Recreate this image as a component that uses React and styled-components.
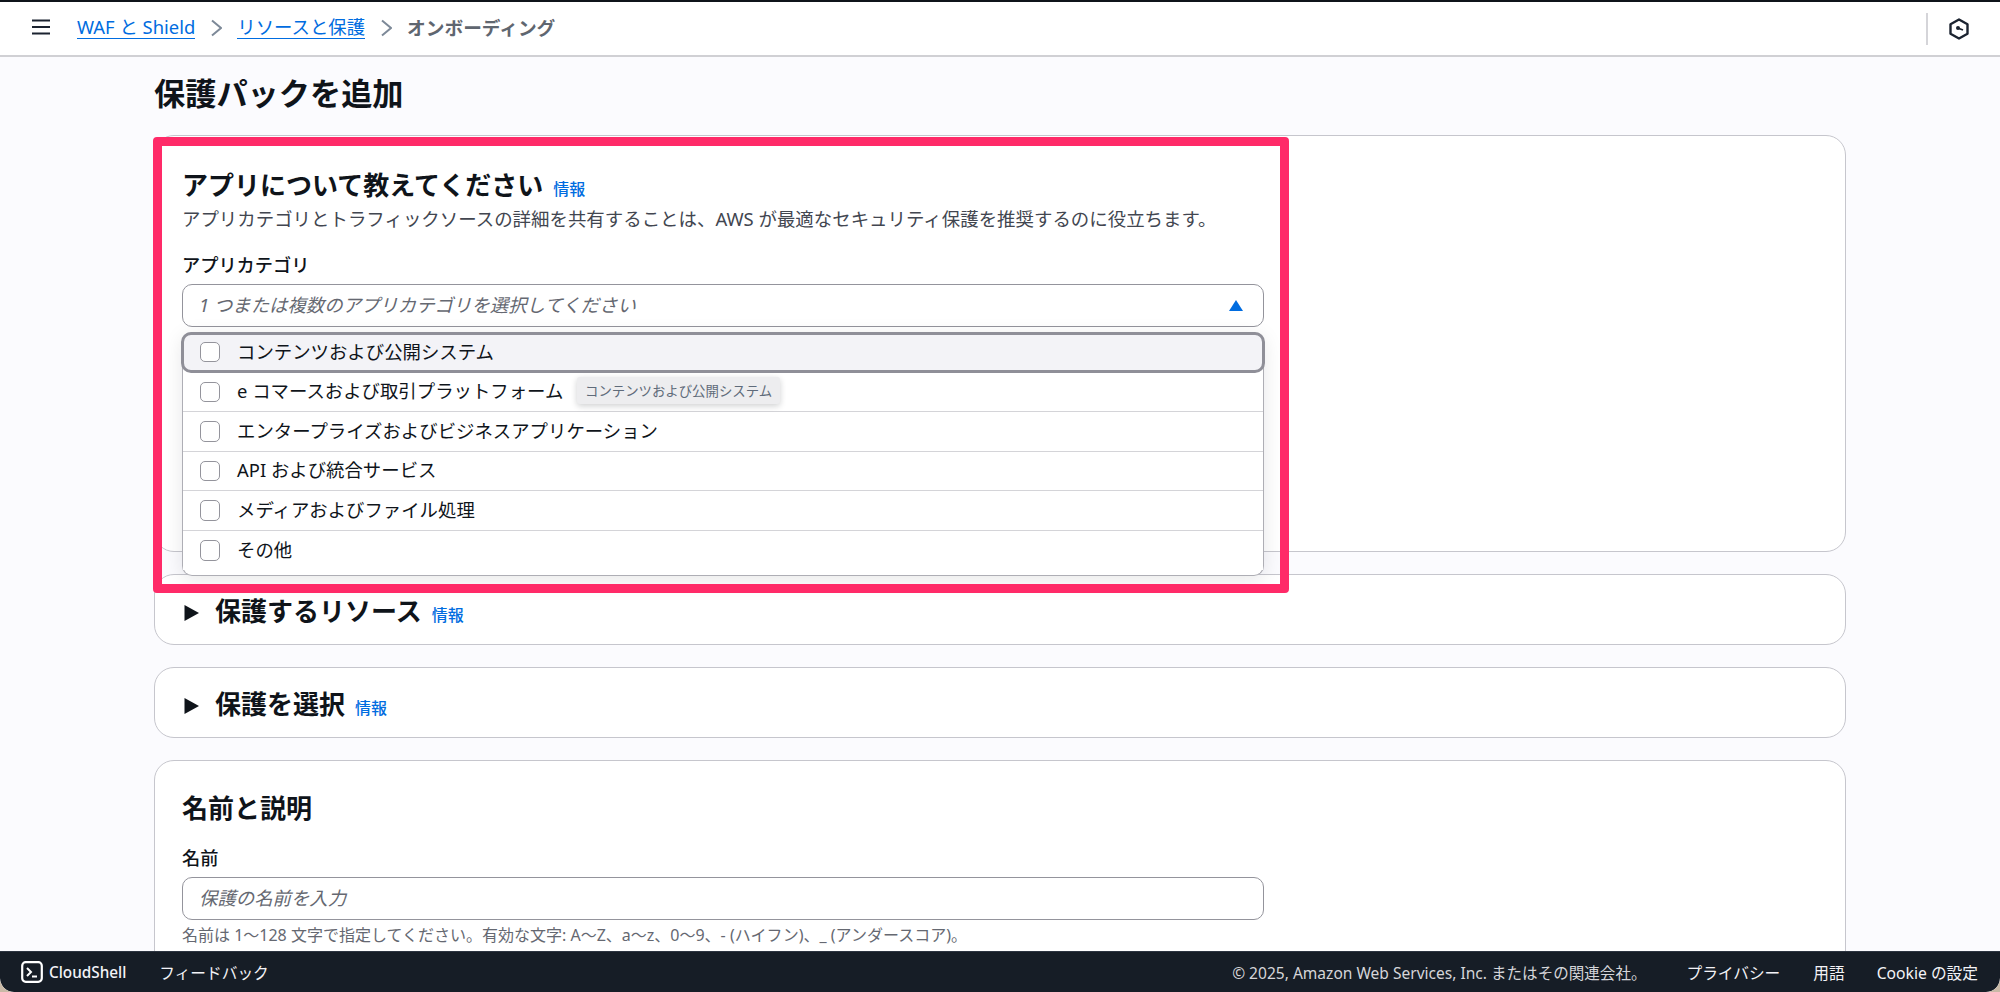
import React from "react";
import styled, { createGlobalStyle } from "styled-components";

const Global = createGlobalStyle`
  html, body { margin: 0; padding: 0; height: 100%; background: #c9b9a6; }
  body { font-family: "Noto Sans", "Noto Sans CJK JP", sans-serif; color: #0f141a; overflow: hidden; }
  #root { height: 992px; }
  * { box-sizing: border-box; }
`;

const Shell = styled.div`
  height: 992px;
  display: flex;
  flex-direction: column;
  overflow: hidden;
  background: #fbfbfe;
  border-radius: 0 0 14px 14px;
`;

const Header = styled.header`
  flex: none;
  height: 57px;
  display: flex;
  align-items: center;
  padding: 0 31px 0 31px;
  background: #fff;
  border-top: 2px solid #0f141a;
  border-bottom: 2px solid #d0d0d4;
`;

const MenuButton = styled.button`
  display: flex;
  padding: 0;
  border: 0;
  background: none;
  color: #1b2330;
  width: 20px;
  margin-top: -4px;
  margin-right: 26px;
`;

const Crumbs = styled.nav`
  display: flex;
  align-items: center;
  gap: 15.5px;
  font-size: 18.4px;
  flex: 1;
  padding-bottom: 2px;
`;

const CrumbLink = styled.a`
  color: #006ce0;
  line-height: 22px;
  border-bottom: 1.5px solid #006ce0;
`;

const CrumbCurrent = styled.span`
  color: #5f6670;
  font-size: 18.7px;
  font-weight: 700;
  line-height: 22px;
`;

const Chevron = styled.svg`
  width: 11px;
  height: 18px;
  color: #7d8998;
`;

const Divider = styled.span`
  width: 2px;
  height: 32px;
  background: #d5d5d9;
  margin-right: 21px;
  margin-left: 1px;
`;

const Main = styled.main`
  flex: 1;
  position: relative;
  min-height: 0;
  overflow: hidden;
  padding: 0 154px;
`;

const PageTitle = styled.h1`
  margin: 0;
  height: 78px;
  padding-top: 14px;
  font-size: 31.2px;
  line-height: 44px;
  font-weight: 700;
`;

const Stack = styled.div`
  display: flex;
  flex-direction: column;
  gap: 22.3px;
`;

const Card = styled.section`
  background: #fff;
  border: 1.3px solid #c6c6cd;
  border-radius: 20px;
  padding: ${(p) => p.$pad || "31px 27px"};
  height: ${(p) => p.$height || "auto"};
  flex: none;
`;

const CardTitle = styled.h2`
  margin: 0;
  display: flex;
  align-items: baseline;
  gap: 10px;
  font-size: 26px;
  line-height: 36px;
  font-weight: 700;
`;

const Info = styled.a`
  color: #006ce0;
  font-size: 16px;
  font-weight: 500;
`;

const Desc = styled.p`
  margin: -1px 0 0;
  font-size: 18.45px;
  line-height: 25px;
  color: #424650;
`;

const Label = styled.div`
  font-size: 18.2px;
  font-weight: 500;
  line-height: 24px;
  margin-top: ${(p) => p.$top || "21.5px"};
  margin-bottom: 7px;
`;

const FieldBox = styled.div`
  position: relative;
  width: 1082px;
`;

const InputBox = styled.div`
  height: 43px;
  display: flex;
  align-items: center;
  justify-content: space-between;
  padding: 0 20px 3px 16px;
  background: #fff;
  border: 1.4px solid #94949c;
  border-radius: 10px;
  font-size: 18.4px;
  font-style: italic;
  color: #656871;
`;

const Caret = styled.svg`
  width: 14px;
  height: 11px;
  margin-top: 3px;
  color: #006ce0;
`;

const Dropdown = styled.div`
  position: absolute;
  left: 0;
  right: 0;
  top: 48px;
  height: 244px;
  background: #fff;
  border: 1.8px solid #aeaeb5;
  border-top: 0;
  border-radius: 10px;
  box-shadow: 0 4px 20px rgba(15, 20, 26, 0.1);
  display: flex;
  flex-direction: column;
`;

const Option = styled.div`
  position: relative;
  flex: none;
  height: ${(p) => (p.$active ? "41px" : "39.6px")};
  margin: ${(p) => (p.$active ? "0 -1.8px" : "0")};
  display: flex;
  align-items: center;
  gap: 17px;
  padding-left: ${(p) => (p.$active ? "15.3px" : "16.5px")};
  font-size: 18.4px;
  background: ${(p) => (p.$active ? "#f3f3f7" : "#fff")};
  border: ${(p) => (p.$active ? "3px solid #8f8f98" : "0")};
  border-radius: ${(p) => (p.$active ? "10px" : "0")};
  border-bottom: ${(p) => (p.$active ? "3px solid #8f8f98" : p.$last ? "0" : "1.6px solid #d4d4d8")};
  color: #0f141a;
`;

const OptionText = styled.span`
  padding-bottom: 3px;
`;

const Check = styled.span`
  flex: none;
  width: 20.5px;
  height: 20.5px;
  background: #fff;
  border: 1.4px solid #94949c;
  border-radius: 5px;
`;

const Tooltip = styled.div`
  position: absolute;
  left: 394px;
  top: 45px;
  height: 27px;
  padding: 0 8px;
  display: flex;
  align-items: center;
  font-size: 13.4px;
  color: #5f6b7a;
  background: #ededef;
  border-radius: 3px;
  box-shadow: 0 2px 6px rgba(15, 20, 26, 0.2);
  white-space: nowrap;
  z-index: 2;
`;

const Arrow = styled.svg`
  flex: none;
  width: 17px;
  height: 16px;
  margin-right: 16px;
  color: #0f141a;
`;

const Help = styled.div`
  margin-top: 4px;
  font-size: 16px;
  line-height: 22px;
  color: #656871;
`;

const Highlight = styled.div`
  position: absolute;
  left: 153px;
  top: 80px;
  width: 1136px;
  height: 456px;
  border: 9px solid #ff2a68;
  border-radius: 4px;
  pointer-events: none;
  z-index: 3;
`;

const Footer = styled.footer`
  flex: none;
  height: 41px;
  display: flex;
  align-items: center;
  padding: 0 22px 0 21px;
  background: #161d26;
  border-top: 1px solid #2c3440;
  border-radius: 0 0 14px 14px;
  color: #e8e8ea;
  font-size: 15.7px;
`;

const ShellLink = styled.span`
  display: flex;
  align-items: center;
  gap: 6px;
  font-size: 15.3px;
  font-weight: 500;
  color: #f3f3f7;
`;

const FooterLink = styled.span`
  margin-left: ${(p) => p.$gap || "33px"};
  color: #f3f3f7;
`;

const Copyright = styled.span`
  margin-left: auto;
  font-size: 15.55px;
  color: #d5d5d9;
`;

const CollapsedName = styled.span`
  margin-left: -10px;
`;

const options = [
  "コンテンツおよび公開システム",
  "e コマースおよび取引プラットフォーム",
  "エンタープライズおよびビジネスアプリケーション",
  "API および統合サービス",
  "メディアおよびファイル処理",
  "その他",
];

const ChevronIcon = () => (
  <Chevron viewBox="0 0 11 18" fill="none" stroke="currentColor" strokeWidth="2">
    <path d="M1 1.5 10 9 1 16.5" />
  </Chevron>
);

const CollapsedCard = ({ title }) => (
  <Card $pad="18px 27px" $height="70.7px">
    <CardTitle>
      <Arrow viewBox="0 0 17 16"><path d="M2.5 0 17 8 2.5 16Z" fill="currentColor" /></Arrow>
      <CollapsedName>{title}</CollapsedName>
      <Info>情報</Info>
    </CardTitle>
  </Card>
);

export default function App() {
  return (
    <>
      <Global />
      <Shell>
        <Header>
          <MenuButton aria-label="menu">
            <svg width="20" height="16" viewBox="0 0 20 16" fill="none" stroke="currentColor" strokeWidth="2.2">
              <path d="M1 1.5h18M1 8h18M1 14.5h18" />
            </svg>
          </MenuButton>
          <Crumbs>
            <CrumbLink>WAF と Shield</CrumbLink>
            <ChevronIcon />
            <CrumbLink>リソースと保護</CrumbLink>
            <ChevronIcon />
            <CrumbCurrent>オンボーディング</CrumbCurrent>
          </Crumbs>
          <Divider />
          <svg width="20" height="22" viewBox="0 0 20 22" fill="none" stroke="#1b2330" strokeWidth="2.4">
            <path d="M10 1.5 18.5 6.2v9.6L10 20.5 1.5 15.8V6.2Z" strokeLinejoin="round" />
            <circle cx="9" cy="10" r="2" fill="#1b2330" stroke="none" />
            <path d="M10 10.5l4 1.5" strokeWidth="1.8" />
          </svg>
        </Header>
        <Main>
          <PageTitle>保護パックを追加</PageTitle>
          <Stack>
            <Card $height="417px">
              <CardTitle>アプリについて教えてください<Info>情報</Info></CardTitle>
              <Desc>アプリカテゴリとトラフィックソースの詳細を共有することは、AWS が最適なセキュリティ保護を推奨するのに役立ちます。</Desc>
              <Label>アプリカテゴリ</Label>
              <FieldBox>
                <InputBox>
                  1 つまたは複数のアプリカテゴリを選択してください
                  <Caret viewBox="0 0 14 11"><path d="M7 0 14 11H0Z" fill="currentColor" /></Caret>
                </InputBox>
                <Dropdown>
                  {options.map((o, i) => (
                    <Option key={o} $active={i === 0} $last={i === options.length - 1}>
                      <Check />
                      <OptionText>{o}</OptionText>
                    </Option>
                  ))}
                  <Tooltip>コンテンツおよび公開システム</Tooltip>
                </Dropdown>
              </FieldBox>
            </Card>
            <CollapsedCard title="保護するリソース" />
            <CollapsedCard title="保護を選択" />
            <Card $height="300px" $pad="29px 27px">
              <CardTitle>名前と説明</CardTitle>
              <Label $top="20px">名前</Label>
              <FieldBox>
                <InputBox>保護の名前を入力</InputBox>
              </FieldBox>
              <Help>名前は 1〜128 文字で指定してください。有効な文字: A〜Z、a〜z、0〜9、- (ハイフン)、_ (アンダースコア)。</Help>
            </Card>
          </Stack>
          <Highlight />
        </Main>
        <Footer>
          <ShellLink>
            <svg width="22" height="22" viewBox="0 0 22 22" fill="none">
              <rect x="1.2" y="1.2" width="19.6" height="19.6" rx="3.5" stroke="#fff" strokeWidth="2.2" />
              <path d="M6 7l4 4-4 4M11 15.5h5" stroke="#fff" strokeWidth="2" />
            </svg>
            CloudShell
          </ShellLink>
          <FooterLink>フィードバック</FooterLink>
          <Copyright>© 2025, Amazon Web Services, Inc. またはその関連会社。</Copyright>
          <FooterLink $gap="40px">プライバシー</FooterLink>
          <FooterLink>用語</FooterLink>
          <FooterLink $gap="32px">Cookie の設定</FooterLink>
        </Footer>
      </Shell>
    </>
  );
}
